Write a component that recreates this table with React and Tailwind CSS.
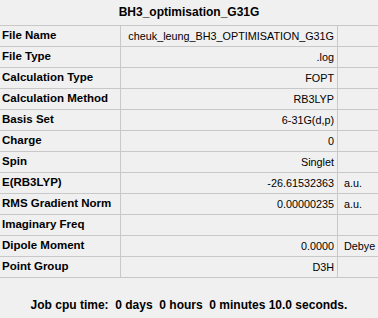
import React from "react";

const rows = [
  ["File Name", "cheuk_leung_BH3_OPTIMISATION_G31G", ""],
  ["File Type", ".log", ""],
  ["Calculation Type", "FOPT", ""],
  ["Calculation Method", "RB3LYP", ""],
  ["Basis Set", "6-31G(d,p)", ""],
  ["Charge", "0", ""],
  ["Spin", "Singlet", ""],
  ["E(RB3LYP)", "-26.61532363", "a.u."],
  ["RMS Gradient Norm", "0.00000235", "a.u."],
  ["Imaginary Freq", "", ""],
  ["Dipole Moment", "0.0000", "Debye"],
  ["Point Group", "D3H", ""],
];

export default function App() {
  return (
    <div
      className="w-[378px] h-[318px] bg-[#f0f0f0] text-black flex flex-col overflow-hidden"
      style={{ fontFamily: '"Liberation Sans", Arial, sans-serif' }}
    >
      <div className="h-[25px] flex items-center justify-center text-[12px] font-bold pb-[1px]">
        BH3_optimisation_G31G
      </div>
      <div className="flex flex-col border-b border-[#c8c8c8]">
        {rows.map(([label, value, unit], i) => (
          <div key={i} className="flex h-[21px] border-t border-[#c8c8c8]">
            <div className="w-[121px] border-r border-[#c8c8c8] flex items-center pl-[2px] font-bold text-[11.5px]">
              {label}
            </div>
            <div className="w-[217px] border-r border-[#c8c8c8] flex items-center justify-end pr-[3px] text-[10.8px]">
              {value}
            </div>
            <div className="flex-1 flex items-center pl-[6px] text-[10.8px]">{unit}</div>
          </div>
        ))}
      </div>
      <div className="flex-1 flex items-end justify-center pb-[4px]">
        <span className="text-[12px] font-bold whitespace-pre">
          {"Job cpu time:  0 days  0 hours  0 minutes 10.0 seconds."}
        </span>
      </div>
    </div>
  );
}
